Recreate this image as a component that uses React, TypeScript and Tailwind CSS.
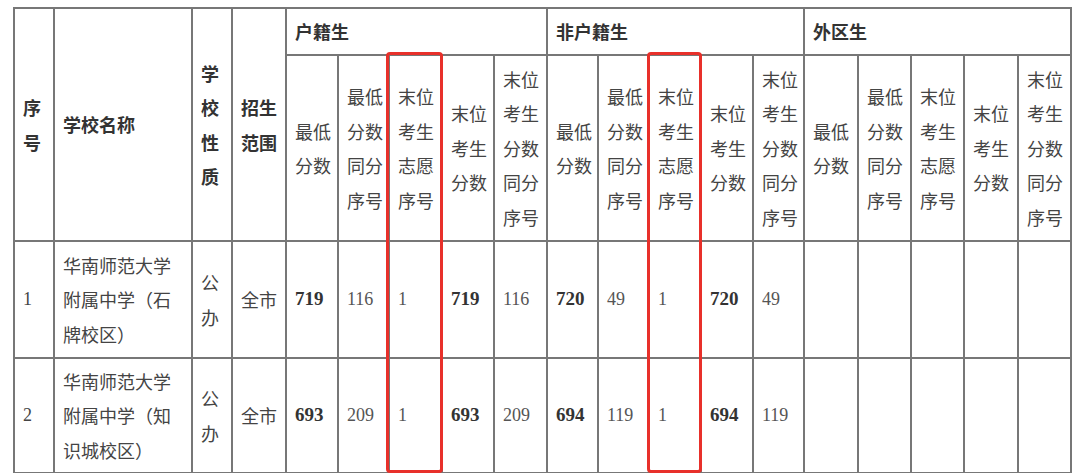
import React from "react";

const widths = [40, 138, 40, 54, 52, 51, 53, 52, 53, 51, 51, 52, 52, 51, 54, 53, 53, 54, 53];

const cell = "border-2 border-[#777] align-middle text-left pl-[8px] pr-0 py-0";
const cjk = { fontFamily: '"Noto Sans CJK SC", "Noto Sans", sans-serif' };
const num = { fontFamily: '"Liberation Serif", "DejaVu Serif", serif' };

const subHeaders: string[][] = [
  ["最低", "分数"],
  ["最低", "分数", "同分", "序号"],
  ["末位", "考生", "志愿", "序号"],
  ["末位", "考生", "分数"],
  ["末位", "考生", "分数", "同分", "序号"],
];

function Lines({ lines }: { lines: string[] }) {
  return (
    <>
      {lines.map((l, i) => (
        <span key={i} className="block whitespace-nowrap">
          {l}
        </span>
      ))}
    </>
  );
}

type Row = {
  idx: string;
  name: string[];
  scores: (string | null)[];
};

const rows: Row[] = [
  {
    idx: "1",
    name: ["华南师范大学", "附属中学（石", "牌校区）"],
    scores: ["719", "116", "1", "719", "116", "720", "49", "1", "720", "49", null, null, null, null, null],
  },
  {
    idx: "2",
    name: ["华南师范大学", "附属中学（知", "识城校区）"],
    scores: ["693", "209", "1", "693", "209", "694", "119", "1", "694", "119", null, null, null, null, null],
  },
];

const boldIdx = new Set([0, 3, 5, 8]);

export default function App() {
  return (
    <div className="relative w-[1080px] h-[473px] bg-white overflow-hidden">
      <div className="pl-[13px] pt-[7px]">
        <table
          className="table-fixed border-collapse text-[18px] leading-[34.5px] text-[#333]"
          style={{ ...cjk, width: 1057 }}
        >
          <colgroup>
            {widths.map((w, i) => (
              <col key={i} style={{ width: w }} />
            ))}
          </colgroup>
          <thead>
            <tr className="h-[47px]">
              <th rowSpan={2} className={`${cell} font-bold text-[#333]`}>
                <Lines lines={["序", "号"]} />
              </th>
              <th rowSpan={2} className={`${cell} font-bold text-[#333]`}>
                学校名称
              </th>
              <th rowSpan={2} className={`${cell} font-bold text-[#333]`}>
                <Lines lines={["学", "校", "性", "质"]} />
              </th>
              <th rowSpan={2} className={`${cell} font-bold text-[#333]`}>
                <Lines lines={["招生", "范围"]} />
              </th>
              <th colSpan={5} className={`${cell} font-bold text-[#333]`}>
                户籍生
              </th>
              <th colSpan={5} className={`${cell} font-bold text-[#333]`}>
                非户籍生
              </th>
              <th colSpan={5} className={`${cell} font-bold text-[#333]`}>
                外区生
              </th>
            </tr>
            <tr className="h-[186px]">
              {[0, 1, 2].flatMap((g) =>
                subHeaders.map((s, i) => (
                  <th key={`${g}-${i}`} className={`${cell} font-normal text-[#444]`}>
                    <Lines lines={s} />
                  </th>
                ))
              )}
            </tr>
          </thead>
          <tbody>
            {rows.map((r, ri) => (
              <tr key={r.idx} className={ri === 0 ? "h-[117px]" : "h-[115px]"}>
                <td className={`${cell} text-[18px] text-[#444]`} style={num}>
                  {r.idx}
                </td>
                <td className={`${cell} text-[#444]`}>
                  <Lines lines={r.name} />
                </td>
                <td className={`${cell} text-[#444]`}>
                  <Lines lines={["公", "办"]} />
                </td>
                <td className={`${cell} text-[#444]`}>全市</td>
                {r.scores.map((s, i) => (
                  <td
                    key={i}
                    className={`${cell} ${boldIdx.has(i) ? "font-bold text-[19px] text-[#333]" : "font-normal text-[18px] text-[#555]"}`}
                    style={num}
                  >
                    {s ?? ""}
                  </td>
                ))}
              </tr>
            ))}
          </tbody>
        </table>
      </div>
      <div className="absolute left-[386px] top-[52px] w-[57px] h-[421px] border-[3px] border-[#e8302a] rounded-[4px]" />
      <div className="absolute left-[647px] top-[52px] w-[55px] h-[421px] border-[3px] border-[#e8302a] rounded-[4px]" />
    </div>
  );
}
